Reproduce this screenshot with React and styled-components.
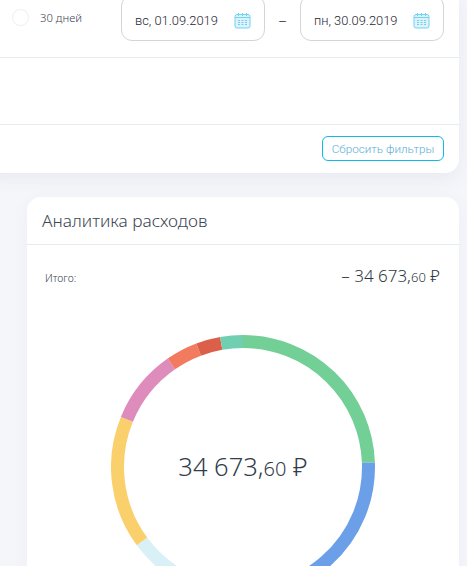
import React from "react";
import styled, { createGlobalStyle } from "styled-components";

const Global = createGlobalStyle`
  html, body { margin: 0; padding: 0; height: 566px; overflow: hidden; background: #f5f6fa; }
  body { font-family: "Noto Sans", "Open Sans", sans-serif; color: #3c4654; }
  #root { height: 566px; overflow: hidden; }
`;

const Page = styled.div`
  display: flex;
  flex-direction: column;
  gap: 24px;
  padding: 0 8px 0 27px;
`;

const FilterCard = styled.section`
  margin: -5px 0 0 -47px;
  background: #fff;
  border-radius: 0 0 14px 14px;
  box-shadow: 0 6px 18px rgba(90, 100, 130, 0.08);
`;

const PeriodRow = styled.div`
  height: 63px;
  padding: 0 15px 0 32px;
  display: flex;
  align-items: flex-start;
  box-sizing: border-box;
  border-bottom: 1px solid #e9eaee;
`;

const RadioLabel = styled.label`
  display: flex;
  align-items: center;
  gap: 11px;
  width: 109px;
  height: 45px;
  font-size: 11.3px;
  font-weight: 300;
  color: #3c4450;
`;

const Radio = styled.span`
  width: 17px;
  height: 17px;
  border-radius: 50%;
  border: 1px solid #eceef1;
  box-sizing: border-box;
`;

const DateField = styled.div`
  width: 144px;
  height: 46px;
  box-sizing: border-box;
  padding: 4px 13px 0 13px;
  display: flex;
  align-items: center;
  justify-content: space-between;
  border: 1px solid #d3d5db;
  border-radius: 11px;
  font-family: "Roboto", sans-serif;
  font-size: 12.9px;
  font-weight: 300;
  color: #1f2832;
`;

const Dash = styled.span`
  width: 35px;
  height: 46px;
  padding-top: 4px;
  box-sizing: border-box;
  display: flex;
  align-items: center;
  justify-content: center;
  color: #3c4654;
  font-size: 16px;
  font-weight: 300;
`;

const EmptyRow = styled.div`
  height: 67px;
  box-sizing: border-box;
  border-bottom: 1px solid #e9eaee;
`;

const ActionRow = styled.div`
  height: 48px;
  box-sizing: border-box;
  padding: 11px 15px 0 0;
  display: flex;
  justify-content: flex-end;
  align-items: flex-start;
`;

const ResetButton = styled.button`
  width: 122px;
  height: 25px;
  padding: 0;
  background: #fff;
  border: 1px solid #0fb9e8;
  border-radius: 6px;
  color: #57aed6;
  font-family: "Roboto", sans-serif;
  font-size: 11.7px;
  font-weight: 300;
`;

const AnalyticsCard = styled.section`
  background: #fff;
  border-radius: 14px 14px 0 0;
  height: 500px;
  box-shadow: 0 4px 16px rgba(90, 100, 130, 0.05);
`;

const CardHeader = styled.header`
  height: 48px;
  box-sizing: border-box;
  padding: 0 15px;
  display: flex;
  align-items: center;
  border-bottom: 1px solid #e8e9ef;
  font-size: 17.3px;
  font-weight: 300;
  color: #3c4654;
  margin: 0;
`;

const TotalRow = styled.div`
  display: flex;
  justify-content: space-between;
  align-items: center;
  height: 24px;
  margin-top: 19px;
  padding: 0 19px 0 18px;
`;

const TotalLabel = styled.span`
  font-size: 10.5px;
  font-weight: 300;
  color: #3c4450;
  padding-top: 4px;
`;

const TotalValue = styled.span`
  font-size: 17px;
  font-weight: 300;
  color: #2f3842;
  padding-bottom: 2px;
`;

const Cents = styled.span`
  font-size: ${(p) => p.$size}px;
  font-weight: 300;
`;

const ChartWrap = styled.div`
  position: relative;
  width: 264px;
  height: 264px;
  margin: 47px 0 0 84px;
`;

const ChartCenter = styled.div`
  position: absolute;
  inset: 0;
  display: flex;
  align-items: center;
  justify-content: center;
  font-size: 25.5px;
  font-weight: 300;
  color: #333d4a;
  padding-bottom: 2px;
`;

const segments = [
  { from: 0, to: 88, color: "#72cf95" },
  { from: 88, to: 190, color: "#6b9fe8" },
  { from: 190, to: 233.6, color: "#d9f0f7" },
  { from: 233.6, to: 292.3, color: "#fad06c" },
  { from: 292.3, to: 325.2, color: "#de8cbb" },
  { from: 325.2, to: 339.3, color: "#f27a5e" },
  { from: 339.3, to: 350, color: "#dc6049" },
  { from: 350, to: 360, color: "#6fcfb0" },
];

function pt(r, deg) {
  const a = (deg * Math.PI) / 180;
  return `${(132 + r * Math.sin(a)).toFixed(2)} ${(132 - r * Math.cos(a)).toFixed(2)}`;
}

function Donut() {
  const r = 125.5;
  return (
    <svg width="264" height="264" viewBox="0 0 264 264" aria-hidden="true">
      {segments.map((s) => (
        <path
          key={s.from}
          d={`M ${pt(r, s.from)} A ${r} ${r} 0 ${s.to - s.from > 180 ? 1 : 0} 1 ${pt(r, s.to)}`}
          fill="none"
          stroke={s.color}
          strokeWidth="13"
        />
      ))}
    </svg>
  );
}

function CalendarIcon() {
  return (
    <svg width="17" height="17" viewBox="0 0 17 17" aria-hidden="true">
      <rect x="1" y="2.5" width="15" height="13.5" rx="2" fill="#dcf3fc" stroke="#72d2f2" strokeWidth="1" />
      <path d="M1 5.5h15" stroke="#72d2f2" />
      <path d="M4.5 1v3M8.5 1v3M12.5 1v3" stroke="#72d2f2" />
      <path d="M4 8.5h2M7.5 8.5h2M11 8.5h2M4 10.5h2M7.5 10.5h2M11 10.5h2M4 12.5h2M7.5 12.5h2M11 12.5h2" stroke="#72cdf0" />
    </svg>
  );
}

export default function App() {
  return (
    <>
      <Global />
      <Page>
        <FilterCard>
          <PeriodRow>
            <RadioLabel>
              <Radio />
              30 дней
            </RadioLabel>
            <DateField>
              вс, 01.09.2019
              <CalendarIcon />
            </DateField>
            <Dash>–</Dash>
            <DateField>
              пн, 30.09.2019
              <CalendarIcon />
            </DateField>
          </PeriodRow>
          <EmptyRow />
          <ActionRow>
            <ResetButton>Сбросить фильтры</ResetButton>
          </ActionRow>
        </FilterCard>
        <AnalyticsCard>
          <CardHeader>Аналитика расходов</CardHeader>
          <TotalRow>
            <TotalLabel>Итого:</TotalLabel>
            <TotalValue>
              – 34 673,<Cents $size={13}>60</Cents> ₽
            </TotalValue>
          </TotalRow>
          <ChartWrap>
            <Donut />
            <ChartCenter>
              <span>
                34 673,<Cents $size={20}>60</Cents> ₽
              </span>
            </ChartCenter>
          </ChartWrap>
        </AnalyticsCard>
      </Page>
    </>
  );
}
